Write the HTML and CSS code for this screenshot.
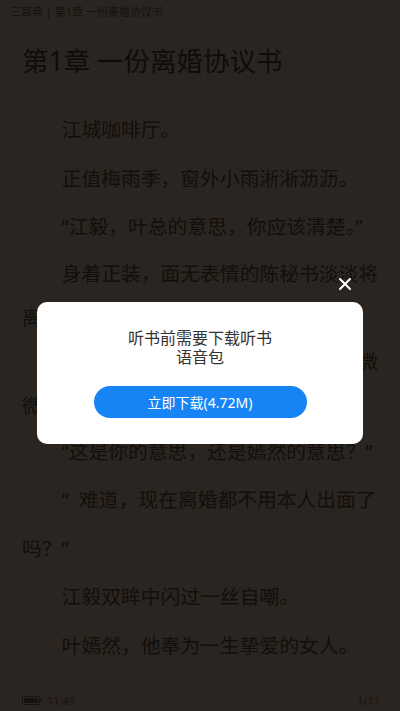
FILE: index.html
```html
<!DOCTYPE html>
<html lang="zh-CN">
<head>
    <meta charset="utf-8">
    <title>第1章 一份离婚协议书</title>
    <link rel="stylesheet" href="styles.css">
</head>
<body>
    <div class="reader">
        <div class="top-bar">三耳典 | 第1章 一份离婚协议书</div>
        <h1 class="chapter-title">第1章 一份离婚协议书</h1>
        <div class="content">
            <p>江城咖啡厅。</p>
            <p>正值梅雨季，窗外小雨淅淅沥沥。</p>
            <p>“江毅，叶总的意思，你应该清楚。”</p>
            <p class="tight">身着正装，面无表情的陈秘书淡淡将离婚协议书推到了江毅面前。</p>
            <p class="tight">江毅看着桌上的那份协议书，嘴角微微上扬，露出一抹苦涩。</p>
            <p>“这是你的意思，还是嫣然的意思？”</p>
            <p>“&nbsp;&nbsp;难道，现在离婚都不用本人出面了吗？”</p>
            <p>江毅双眸中闪过一丝自嘲。</p>
            <p>叶嫣然，他奉为一生挚爱的女人。</p>
        </div>
        <div class="bottom-bar">
            <div class="status">
                <svg class="battery" width="20" height="9" viewBox="0 0 20 9">
                    <rect x="0.5" y="0.5" width="17" height="8" rx="1" fill="none" stroke="currentColor"/>
                    <rect x="2" y="2" width="14" height="5" fill="currentColor"/>
                    <rect x="18" y="3" width="1.5" height="3" fill="currentColor"/>
                </svg>
                <span>11:49</span>
            </div>
            <span>1/11</span>
        </div>
    </div>

    <div class="overlay">
        <div class="dialog">
            <button class="close-btn" aria-label="关闭">
                <svg width="12" height="12" viewBox="0 0 12 12">
                    <path d="M1 1 L11 11 M11 1 L1 11" stroke="#fff" stroke-width="2" stroke-linecap="round"/>
                </svg>
            </button>
            <div class="dialog-text">听书前需要下载听书<br>语音包</div>
            <button class="download-btn">立即下载(4.72M)</button>
        </div>
    </div>
</body>
</html>
```

FILE: styles.css
```css
* {
    margin: 0;
    padding: 0;
    box-sizing: border-box;
}

body {
    font-family: "Noto Sans", "Noto Sans CJK SC", sans-serif;
    background: #d2b9a0;
    color: #5a4b3c;
}

.reader {
    min-height: 100vh;
    display: flex;
    flex-direction: column;
    padding: 0 20px 0 22px;
}

.top-bar {
    height: 24px;
    line-height: 24px;
    font-size: 11px;
    color: #6e5e4c;
    margin-left: -12px;
}

.chapter-title {
    margin-top: 22px;
    font-size: 26.5px;
    font-weight: 400;
    line-height: 30px;
    color: #4e4032;
}

.content {
    margin-top: 30px;
}

.content p {
    font-size: 19.8px;
    line-height: 48.5px;
    text-indent: 2em;
}

.content p.tight {
    line-height: 44px;
}

.bottom-bar {
    margin-top: auto;
    height: 22px;
    display: flex;
    justify-content: space-between;
    align-items: center;
    font-size: 11px;
    color: #6e5e4c;
}

.status {
    display: flex;
    align-items: center;
    gap: 5px;
}

.battery {
    display: block;
}

.overlay {
    position: fixed;
    inset: 0;
    background: rgba(0, 0, 0, 0.8);
    display: flex;
    flex-direction: column;
    align-items: center;
    padding-top: 302px;
}

.dialog {
    position: relative;
    width: 326px;
    background: #fff;
    border-radius: 10px;
    padding: 27px 0 26px;
    display: flex;
    flex-direction: column;
    align-items: center;
}

.close-btn {
    position: absolute;
    top: -24px;
    right: 12px;
    width: 12px;
    height: 12px;
    border: none;
    background: none;
}

.close-btn svg {
    display: block;
}

.dialog-text {
    font-size: 16px;
    line-height: 19px;
    color: #333;
    text-align: center;
}

.download-btn {
    margin-top: 19px;
    width: 213px;
    height: 32px;
    border: none;
    border-radius: 16px;
    background: #1784f6;
    color: #fff;
    font-family: "Noto Sans", "Noto Sans CJK SC", sans-serif;
    font-size: 14px;
}
```
